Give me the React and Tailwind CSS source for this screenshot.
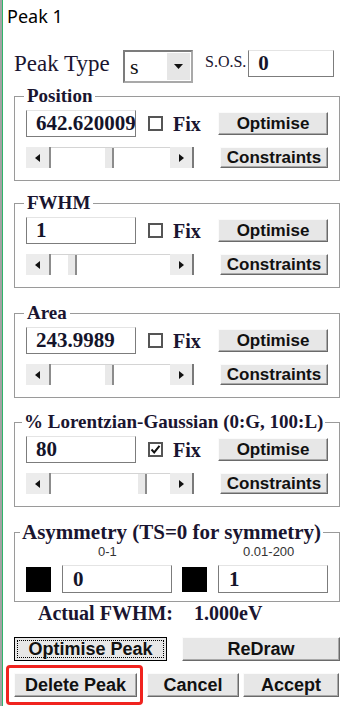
import React from 'react'

const serif = "font-['Liberation_Serif','Times_New_Roman',serif]"
const sans = "font-['Liberation_Sans',Arial,sans-serif]"

const btn =
  "flex items-center justify-center bg-[#e7e7e7] border border-t-[#fbfbfb] border-l-[#fbfbfb] border-r-[#6a6a6a] border-b-[#6a6a6a] shadow-[inset_-1px_-1px_0_#a9a9a9] font-bold leading-none text-[#111] " + sans

const field =
  "flex items-center bg-white border-l border-r border-b border-[#7c7c7c] border-t border-t-[#e4e4e4] font-bold text-[21px] leading-none text-[#14142a] " + serif

function Arrow({ dir }) {
  return (
    <svg width="5" height="8" viewBox="0 0 5 8">
      {dir === 'left'
        ? <polygon points="5,0 5,8 0,4" fill="#111" />
        : <polygon points="0,0 0,8 5,4" fill="#111" />}
    </svg>
  )
}

function Scroller({ thumb }) {
  return (
    <div className="flex h-[21px] w-[168px]">
      <div className="flex w-[25px] items-center justify-center bg-[#ececec] border-r-2 border-[#8c8c8c]">
        <Arrow dir="left" />
      </div>
      <div className="flex flex-1 bg-white border-t border-[#d4d4d4]">
        <div style={{ width: thumb }} />
        <div className="w-[9px] bg-[#e9e9e9] border-r-2 border-[#8c8c8c]" />
      </div>
      <div className="flex w-[24px] items-center justify-center bg-[#ececec] border-r-2 border-[#7a7a7a]">
        <Arrow dir="right" />
      </div>
    </div>
  )
}

function CheckBox({ checked }) {
  return (
    <div className="flex h-[15px] w-[15px] items-center justify-center border-2 border-[#555] bg-white">
      {checked && (
        <svg width="11" height="11" viewBox="0 0 11 11">
          <polyline points="1.5,5.5 4.2,8.4 9.5,1.8" fill="none" stroke="#111" strokeWidth="2" />
        </svg>
      )}
    </div>
  )
}

function Frame({ title, value, checked, thumb, className, legendClass }) {
  return (
    <fieldset className={"ml-[11px] w-[326px] border border-[#9a9a9a] px-[11px] pb-[12px] " + className}>
      <legend className={"whitespace-nowrap leading-[16px] font-bold text-[#1a1530] " + serif + " " + legendClass}>{title}</legend>
      <div className="mt-[6px] flex h-[27px] items-center">
        <div className={field + " h-[27px] w-[110px] overflow-hidden whitespace-nowrap pl-[9px]"}>{value}</div>
        <div className="ml-[12px]"><CheckBox checked={checked} /></div>
        <span className={"ml-[10px] text-[20px] leading-none font-bold text-[#1a1530] " + serif}>Fix</span>
        <div className={btn + " ml-auto h-[23px] w-[110px] text-[17px]"}>Optimise</div>
      </div>
      <div className="mt-[10px] flex items-center">
        <Scroller thumb={thumb} />
        <div className={btn + " ml-auto h-[21px] w-[108px] text-[17px]"}>Constraints</div>
      </div>
    </fieldset>
  )
}

export default function App() {
  return (
    <div className="flex h-[706px] w-[346px] overflow-hidden bg-white text-[#111]">
      <div className="w-[2px] bg-[#a3a3a3]" />
      <div className="w-px bg-[#2fb56b]" />
      <div className="flex flex-1 flex-col">
        <div className="ml-[4px] pt-[4px] font-['Noto_Sans',sans-serif] text-[18px] leading-[24px] text-black">Peak 1</div>

        {/* peak type row */}
        <div className="ml-[11px] mt-[22px] flex h-[33px] items-start">
          <span className={"mt-[2px] w-[109px] text-[23px] leading-none text-[#1a1530] " + serif}>Peak Type</span>
          <div className="flex h-[33px] w-[70px] border-2 border-t-[#7c7c7c] border-l-[#7c7c7c] border-r-[#a9a9a9] border-b-[#a9a9a9] bg-white">
            <span className={"flex-1 pl-[5px] pt-[4px] text-[22px] leading-none " + serif}>s</span>
            <div className="my-[1px] mr-[1px] flex w-[23px] items-center justify-center bg-[#e6e6e6]">
              <svg width="9" height="5" viewBox="0 0 9 5"><polygon points="0,0 9,0 4.5,5" fill="#111" /></svg>
            </div>
          </div>
          <span className={"ml-[12px] mt-[4px] text-[16px] leading-none text-[#1a1530] " + serif}>S.O.S.</span>
          <div className={field + " ml-[2px] h-[27px] w-[86px] pl-[9px]"}>0</div>
        </div>

        <Frame className="mt-[5px]" legendClass="-ml-[2px] px-[3px] text-[19px]" title="Position" value="642.620009" thumb={54} />
        <Frame className="mt-[14px]" legendClass="-ml-[2px] px-[3px] text-[19px]" title="FWHM" value="1" thumb={17} />
        <Frame className="mt-[17px]" legendClass="-ml-[2px] px-[3px] text-[19px]" title="Area" value="243.9989" thumb={54} />
        <Frame className="mt-[16px]" legendClass="-ml-[4px] px-[2px] text-[19px]" title="% Lorentzian-Gaussian (0:G, 100:L)" value="80" checked thumb={87} />

        {/* asymmetry */}
        <fieldset className="ml-[11px] mt-[14px] w-[326px] border border-[#9a9a9a] px-[11px] pb-[8px]">
          <legend className={"-ml-[6px] whitespace-nowrap px-[2px] text-[21px] leading-[22px] font-bold text-[#1a1530] " + serif}>Asymmetry (TS=0 for symmetry)</legend>
          <div className={"mt-[3px] flex text-[13px] leading-[12px] text-[#333] " + sans}>
            <span className="w-[217px] pl-[72px]">0-1</span>
            <span>0.01-200</span>
          </div>
          <div className="mt-[7px] flex items-center">
            <div className="h-[25px] w-[25px] bg-black" />
            <div className={field + " ml-[11px] h-[28px] w-[110px] pl-[10px]"}>0</div>
            <div className="ml-[10px] h-[25px] w-[25px] bg-black" />
            <div className={field + " ml-[11px] h-[28px] w-[110px] pl-[10px]"}>1</div>
          </div>
        </fieldset>

        <div className={"ml-[35px] mt-[1px] flex text-[20px] leading-none font-bold text-[#1a1530] " + serif}>
          <span className="w-[156px]">Actual FWHM:</span>
          <span>1.000eV</span>
        </div>

        {/* bottom buttons */}
        <div className="ml-[11px] mt-[14px] flex h-[24px]">
          <div className="flex h-[24px] w-[153px] border border-black bg-[#e7e7e7] p-[2px]">
            <div className={"flex flex-1 items-center justify-center border border-dotted border-black text-[18px] leading-none font-bold text-[#111] " + sans}>Optimise Peak</div>
          </div>
          <div className={btn + " ml-[15px] h-[24px] w-[158px] text-[18px]"}>ReDraw</div>
        </div>
        <div className="ml-[3px] mt-[4px] flex items-center">
          <div className="rounded-[4px] border-[3px] border-[#f0231f] py-[5px] pl-[5px] pr-[3px]">
            <div className={btn + " h-[24px] w-[123px] text-[18px]"}>Delete Peak</div>
          </div>
          <div className={btn + " ml-[4px] h-[24px] w-[92px] text-[18px]"}>Cancel</div>
          <div className={btn + " ml-[4px] h-[24px] w-[96px] text-[18px]"}>Accept</div>
        </div>
      </div>
    </div>
  )
}
